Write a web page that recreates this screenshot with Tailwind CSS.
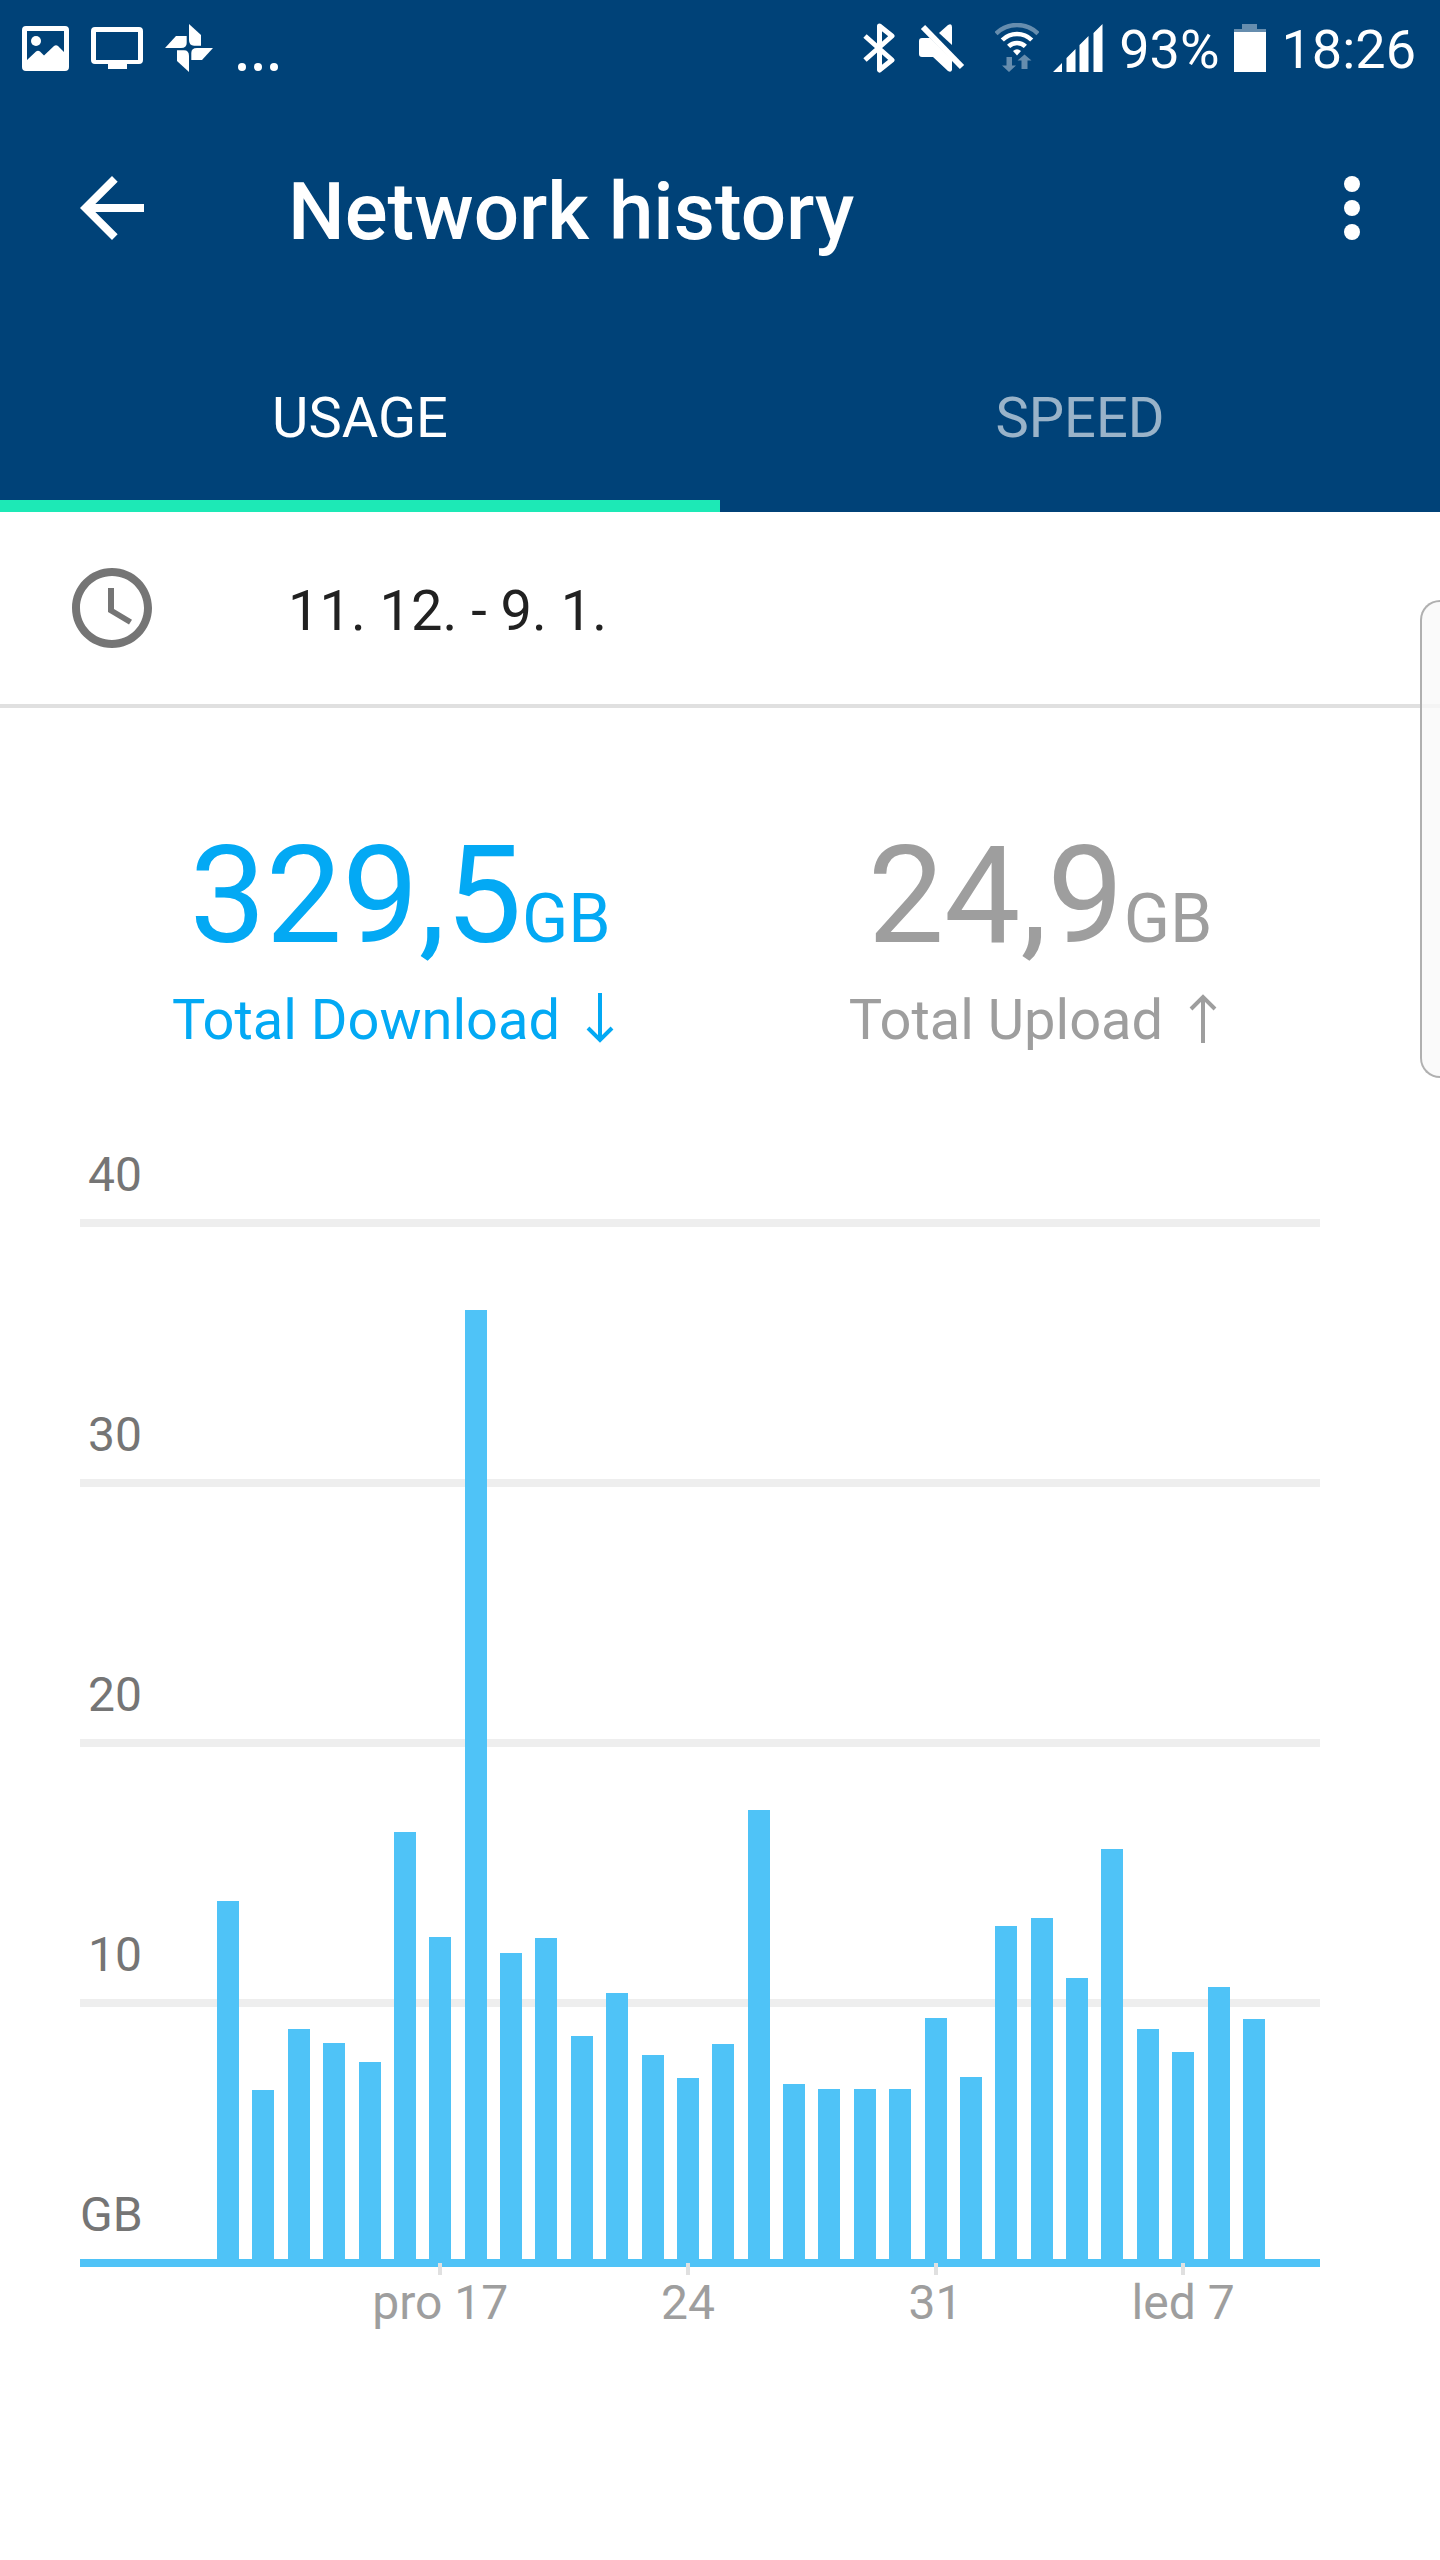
<!DOCTYPE html>
<html lang="en">
<head>
    <meta charset="UTF-8">
    <meta name="viewport" content="width=device-width, initial-scale=1.0">
    <title>Network history</title>
    <script src="https://cdn.jsdelivr.net/npm/@tailwindcss/browser@4"></script>
</head>
<body class="bg-white min-h-screen font-[Roboto,sans-serif]">

    <header class="bg-[#004278] text-white">
        <!-- Status bar -->
        <div class="flex h-24 items-center justify-between pr-6 pl-[22px]">
            <div class="flex items-center gap-[22px]">
                <svg class="h-[45px] w-[47px]" viewBox="0 0 47 45" fill="currentColor" fill-rule="evenodd">
                    <path d="M4 0H43Q47 0 47 4V41Q47 45 43 45H4Q0 45 0 41V4Q0 0 4 0ZM5 5V34L14 25.500Q16 24 18 25.500L22 29.500L32 20Q34 18.500 36 20L42 26V5Z"/>
                    <circle cx="14" cy="15" r="5"/>
                </svg>
                <svg class="h-[48px] w-[52px]" viewBox="0 -3 52 48" fill="currentColor" fill-rule="evenodd">
                    <path d="M4 0H48Q52 0 52 4V33Q52 37 48 37H36V42H17V37H4Q0 37 0 33V4Q0 0 4 0ZM5 5V33H47V5Z"/>
                </svg>
                <svg class="size-12" viewBox="0 0 48 48" fill="currentColor">
                    <path id="blade" d="M24 0L36 11V21.700H29Q24 21.700 24 16Z"/>
                    <use href="#blade" transform="rotate(90 24 24)"/>
                    <use href="#blade" transform="rotate(180 24 24)"/>
                    <use href="#blade" transform="rotate(270 24 24)"/>
                </svg>
                <svg class="h-12 w-[44px]" viewBox="-3 0 44 48" fill="currentColor">
                    <circle cx="4" cy="43" r="4"/>
                    <circle cx="20" cy="43" r="4"/>
                    <circle cx="36" cy="43" r="4"/>
                </svg>
            </div>
            <div class="flex items-center">
                <svg class="mr-6 h-[50px] w-8" viewBox="0 0 32 50" fill="none" stroke="currentColor" stroke-width="5" stroke-linejoin="round">
                    <path d="M2 13L29 37L16.500 47V3L29 13L2 37"/>
                </svg>
                <svg class="mr-[30px] h-[50px] w-[46px]" viewBox="0 0 46 50" fill="currentColor">
                    <path d="M3 15H11L33 37V47Q32 50 29 48L14 34H3Q0 34 0 31V18Q0 15 3 15Z"/>
                    <path d="M20 10L29 2Q33 0 33 4V22Z"/>
                    <path d="M4 4L43 44" stroke="currentColor" stroke-width="6"/>
                </svg>
                <svg class="mr-3.5 h-[50px] w-11" viewBox="0 0 44 50" fill="none" stroke="currentColor" stroke-width="4.500">
                    <path class="opacity-40" d="M1 10.600A30 30 0 0 1 43 10.600"/>
                    <path d="M7.300 17A21 21 0 0 1 36.700 17M13.600 23.400A12 12 0 0 1 30.400 23.400"/>
                    <path fill="currentColor" stroke="none" d="M22 32.500L18 28Q22 24.500 26 28Z"/>
                    <path class="opacity-40" fill="currentColor" stroke="none" d="M11.500 34H17V42.500H21L14 49L7 42.500H11.500ZM26.500 46V37.500H22.500L29.500 31.500L36.500 37.500H32.500V46Z"/>
                </svg>
                <svg class="mr-4 h-12 w-[50px]" viewBox="0 0 50 48" fill="currentColor">
                    <path d="M0 48L9 39V48ZM13.500 48V34L22.500 25V48ZM26.500 48V21L35.500 12V48ZM40.500 48V9L49.500 0V48Z"/>
                </svg>
                <span class="pt-1 text-[54px] leading-none">93%</span>
                <svg class="mr-4 ml-3.5 h-12 w-8" viewBox="0 0 32 48" fill="currentColor">
                    <path class="opacity-40" d="M8 0H23V5H32V8H0V5H8Z"/>
                    <path d="M0 8H32V48H0Z"/>
                </svg>
                <span class="pt-1 text-[54px] leading-none">18:26</span>
            </div>
        </div>

        <!-- Toolbar -->
        <div class="flex h-56 items-center pr-10 pl-16">
            <button aria-label="Back" class="size-24">
                <svg class="size-24" viewBox="0 0 24 24" fill="currentColor"><path d="M20 11H7.830l5.590-5.590L12 4l-8 8 8 8 1.410-1.410L7.830 13H20v-2z"/></svg>
            </button>
            <h1 class="flex-1 pt-2 pl-32 text-[80px] leading-none font-medium">Network history</h1>
            <button aria-label="More options" class="size-24">
                <svg class="size-24" viewBox="0 0 24 24" fill="currentColor"><circle cx="12" cy="6" r="2"/><circle cx="12" cy="12" r="2"/><circle cx="12" cy="18" r="2"/></svg>
            </button>
        </div>

        <!-- Tabs -->
        <nav class="grid h-48 grid-cols-2 text-[56px] leading-none">
            <a href="#usage" class="flex items-center justify-center border-b-12 border-[#1de9b6] pt-4">USAGE</a>
            <a href="#speed" class="flex items-center justify-center border-b-12 border-transparent pt-4 text-white/60">SPEED</a>
        </nav>
    </header>

    <main>
        <div class="flex h-[196px] items-center border-b-4 border-[#e0e0e0] px-16">
            <svg class="size-24 text-[#757575]" viewBox="0 0 24 24" fill="currentColor">
                <path d="M11.990 2C6.470 2 2 6.480 2 12s4.470 10 9.990 10C17.520 22 22 17.520 22 12S17.520 2 11.990 2zM12 20c-4.420 0-8-3.580-8-8s3.580-8 8-8 8 3.580 8 8-3.580 8-8 8z"/>
                <path d="M12.500 7H11v6l5.250 3.150.750-1.230-4.500-2.670z"/>
            </svg>
            <span class="pt-1.5 pl-32 text-[56px] leading-none text-[#212121]">11. 12. - 9. 1.</span>
        </div>

        <!-- Totals -->
        <section class="grid grid-cols-2 px-20 pt-30">
            <div class="flex flex-col items-center text-[#03a9f4]">
                <p class="text-[136px] leading-none">329,5<span class="text-[68px]">GB</span></p>
                <p class="mt-6 flex items-center gap-3 text-[56px] leading-[64px]">
                    Total Download
                    <svg class="h-14 w-14" viewBox="0 0 56 56" fill="none" stroke="currentColor" stroke-width="4"><path d="M28 1V48M16 36L28 48L40 36"/></svg>
                </p>
            </div>
            <div class="flex flex-col items-center text-[#9e9e9e]">
                <p class="text-[136px] leading-none">24,9<span class="text-[68px]">GB</span></p>
                <p class="mt-6 flex items-center gap-3 text-[56px] leading-[64px]">
                    Total Upload
                    <svg class="h-14 w-14" viewBox="0 0 56 56" fill="none" stroke="currentColor" stroke-width="4"><path d="M28 51V5M16 17L28 5L40 17"/></svg>
                </p>
            </div>
        </section>

        <!-- Chart -->
        <section class="pr-30 pl-20">
            <div class="grid">
                <div class="col-start-1 row-start-1 text-[48px] leading-[56px] text-[#757575]">
                    <div class="flex h-[175px] items-end border-b-8 border-[#eeeeee] pb-4"><span class="w-[62px] text-right">40</span></div>
                    <div class="flex h-[260px] items-end border-b-8 border-[#eeeeee] pb-4"><span class="w-[62px] text-right">30</span></div>
                    <div class="flex h-[260px] items-end border-b-8 border-[#eeeeee] pb-4"><span class="w-[62px] text-right">20</span></div>
                    <div class="flex h-[260px] items-end border-b-8 border-[#eeeeee] pb-4"><span class="w-[62px] text-right">10</span></div>
                    <div class="flex h-[260px] items-end border-b-8 border-[#4fc3f7] pb-4"><span class="w-[62px] text-right">GB</span></div>
                </div>
                <div id="bars" class="col-start-1 row-start-1 mb-1 flex h-[1040px] items-end justify-between self-end pr-[55px] pl-[137px]"></div>
            </div>
            <div id="axis" class="-mt-1 flex justify-between pr-[55px] pl-[137px] text-[48px] leading-[56px] text-[#9e9e9e]"></div>
        </section>
    </main>

    <!-- Edge panel handle -->
    <div class="absolute top-[600px] right-0 h-[478px] w-5 rounded-l-[20px] border-2 border-r-0 border-[#b0b0b0] bg-[#f9f9f9]/80"></div>

    <script>
        const max = 40;
        const usage = [
            13.92, 6.65, 9.0, 8.46, 7.73, 16.58, 12.54, 36.65, 11.92, 12.5,
            8.73, 10.38, 8.0, 7.12, 8.42, 17.42, 6.88, 6.69, 6.69, 6.69,
            9.42, 7.15, 12.96, 13.27, 10.96, 15.92, 9.0, 8.12, 10.62, 9.38
        ];
        const labels = { 6: 'pro 17', 13: '24', 20: '31', 27: 'led 7' };

        const bars = document.getElementById('bars');
        const axis = document.getElementById('axis');

        usage.forEach((value, i) => {
            bars.innerHTML += `<div class="w-[22px] bg-[#4fc3f7]" style="height: ${value / max * 100}%"></div>`;
            axis.innerHTML += labels[i]
                ? `<div class="flex w-[22px] flex-col items-center whitespace-nowrap">
                       <div class="z-10 h-3 w-1 bg-[#e0e0e0]"></div>
                       <span>${labels[i]}</span>
                   </div>`
                : `<div class="w-[22px]"></div>`;
        });
    </script>
</body>
</html>
